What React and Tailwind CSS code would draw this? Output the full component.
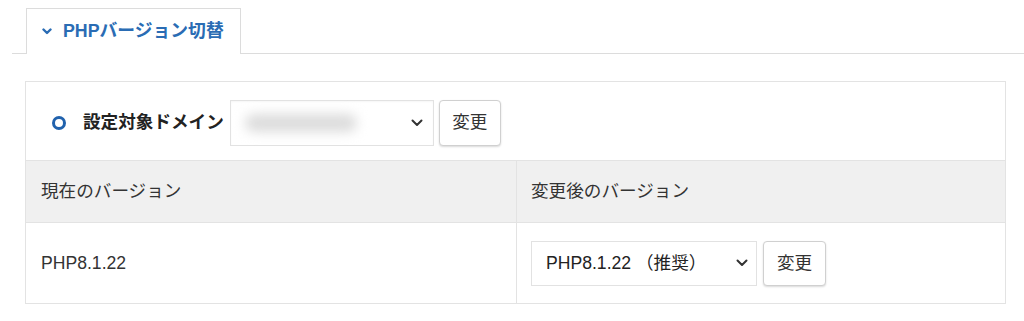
import React from "react";

const FONT = { fontFamily: '"Liberation Sans", Arial, "Noto Sans CJK JP", sans-serif' };

function Chevron({ className }) {
  return (
    <svg viewBox="0 0 12 8" className={className} fill="none" stroke="currentColor" strokeWidth="2" strokeLinecap="round" strokeLinejoin="round">
      <path d="M1.5 1.5 L6 6 L10.5 1.5" />
    </svg>
  );
}

export default function App() {
  return (
    <div className="w-[1024px] h-[321px] bg-white text-[#333]" style={FONT}>
      <div className="pl-3 pt-2">
        <div className="flex border-b border-[#dcdcdc]">
          <div className="ml-[14px] -mb-px flex h-[46px] w-[215px] items-center border border-b-0 border-[#dcdcdc] bg-white pl-[15px]">
            <svg viewBox="0 0 10 7" className="h-[7px] w-[10px] text-[#2a6cb4]" fill="none" stroke="currentColor" strokeWidth="2.4" strokeLinecap="round" strokeLinejoin="round">
              <path d="M1.5 1.5 L5 5 L8.5 1.5" />
            </svg>
            <span className="ml-[11px] text-[17.8px] font-bold text-[#2a6cb4]">PHPバージョン切替</span>
          </div>
        </div>
      </div>

      <div className="ml-[25px] mt-[27px] w-[981px] border border-[#e3e3e3]">
        <div className="flex h-[79px] items-center border-b border-[#e3e3e3] pl-[26px] pt-[3px]">
          <span className="h-[14px] w-[14px] rounded-full border-[3px] border-[#2162ad]" />
          <span className="ml-[17px] text-[17.6px] font-bold text-[#222]">設定対象ドメイン</span>
          <div className="ml-[6px] flex h-[46px] w-[204px] items-center border border-[#e2e2e2] bg-white pl-[14px] pr-[10px] shadow-[inset_0_1px_2px_rgba(0,0,0,0.04)]">
            <div className="h-[18px] w-[112px] rounded-full bg-[#dcdcdc] blur-[6px]" />
            <Chevron className="ml-auto h-[8px] w-[12px] text-[#333]" />
          </div>
          <button className="ml-[5px] h-[46px] w-[62px] rounded-[4px] border border-[#d0d0d0] bg-white text-[17.6px] text-[#333] shadow-[0_1px_2px_rgba(0,0,0,0.15)]">
            変更
          </button>
        </div>

        <div className="grid grid-cols-[491px_1fr] bg-[#f0f0f0] border-b border-[#e3e3e3]">
          <div className="flex h-[61px] items-center border-r border-[#e3e3e3] pl-[15px] text-[17.6px]">現在のバージョン</div>
          <div className="flex h-[61px] items-center pl-[14px] text-[17.6px]">変更後のバージョン</div>
        </div>

        <div className="grid grid-cols-[491px_1fr]">
          <div className="flex h-[80px] items-center border-r border-[#e3e3e3] pl-[15px] text-[17.6px]">PHP8.1.22</div>
          <div className="flex h-[80px] items-center pl-[14px]">
            <div className="flex h-[45px] w-[226px] items-center border border-[#e2e2e2] bg-white pl-[14px] pr-[8px] text-[17.6px] text-[#222]">
              <span>PHP8.1.22 （推奨）</span>
              <Chevron className="ml-auto h-[8px] w-[12px] text-[#333]" />
            </div>
            <button className="ml-[6px] h-[45px] w-[63px] rounded-[4px] border border-[#d0d0d0] bg-white text-[17.6px] text-[#333] shadow-[0_1px_2px_rgba(0,0,0,0.15)]">
              変更
            </button>
          </div>
        </div>
      </div>
    </div>
  );
}
